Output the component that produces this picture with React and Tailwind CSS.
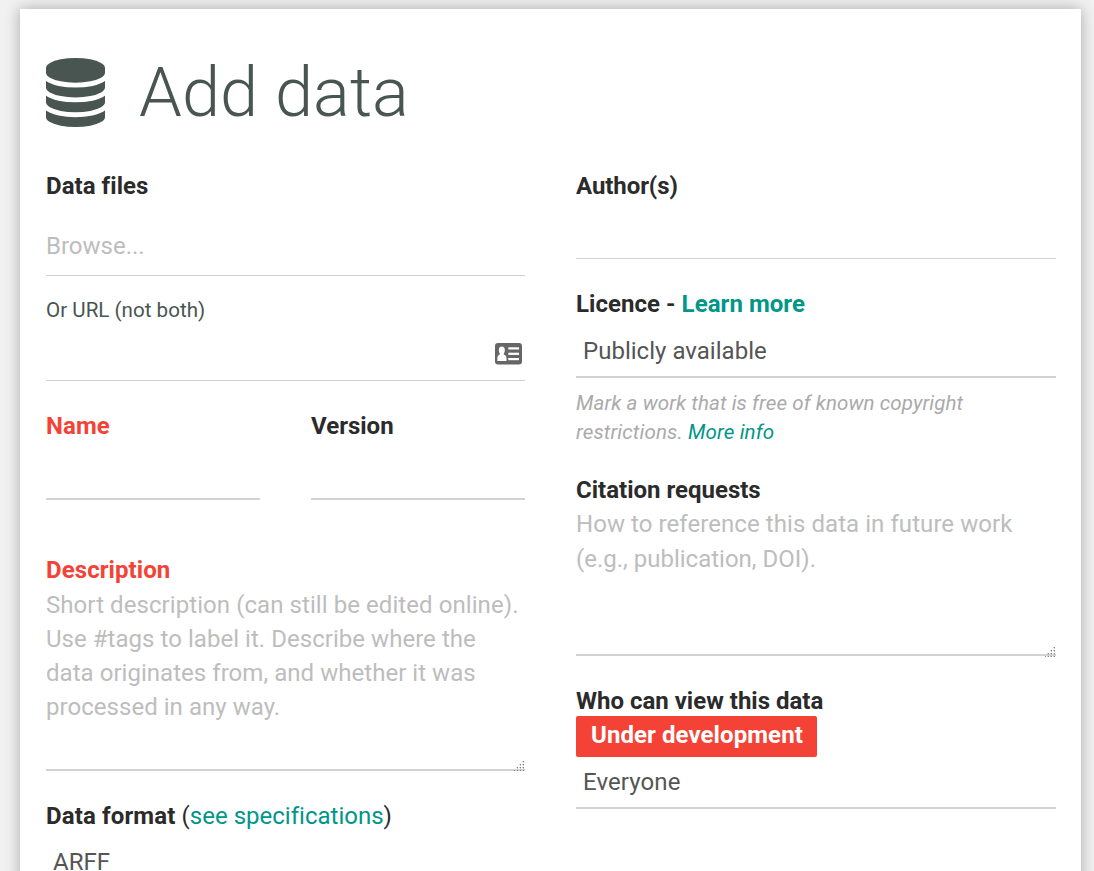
import React from "react";

function DatabaseIcon() {
  return (
    <svg viewBox="0 0 1536 1792" className="h-[69px] w-[59px] shrink-0 fill-[#485551]" preserveAspectRatio="none" aria-hidden="true">
      <path d="M768 768q237 0 443-43t325-127v170q0 69-103 128t-280 93.500-385 34.500-385-34.500-280-93.500-103-128v-170q119 84 325 127t443 43z" />
      <path d="M768 1152q237 0 443-43t325-127v170q0 69-103 128t-280 93.500-385 34.500-385-34.500-280-93.500-103-128v-170q119 84 325 127t443 43z" />
      <path d="M768 1536q237 0 443-43t325-127v170q0 69-103 128t-280 93.500-385 34.500-385-34.500-280-93.500-103-128v-170q119 84 325 127t443 43z" />
      <path d="M768 0q208 0 385 34.500t280 93.500 103 128v128q0 69-103 128t-280 93.500-385 34.500-385-34.500-280-93.500-103-128v-128q0-69 103-128t280-93.500 385-34.500z" />
    </svg>
  );
}

function ContactIcon() {
  return (
    <svg viewBox="0 0 27 22" className="h-[22px] w-[27px]" aria-hidden="true">
      <rect width="27" height="21.500" rx="3" fill="#666" />
      <g fill="#fff">
        <ellipse cx="6.800" cy="7.200" rx="3" ry="3.700" />
        <path d="M4.800 9h4v2.500c1.700.6 2.500 1.800 2.700 3.500v3H2.300v-3c.2-1.700 1-2.900 2.500-3.500z" />
        <rect x="13.300" y="4.300" width="10.700" height="2.200" />
        <rect x="13.300" y="9.700" width="10.700" height="2.200" />
        <rect x="13.300" y="15" width="10.700" height="2.200" />
      </g>
    </svg>
  );
}

function ResizeGrip({ className }) {
  const dots = [[9, 0], [9, 3], [6, 3], [9, 6], [6, 6], [3, 6], [9, 9], [6, 9], [3, 9], [0, 9]];
  return (
    <svg viewBox="0 0 10 10" className={`absolute size-[10px] ${className}`} shapeRendering="crispEdges" aria-hidden="true">
      {dots.map(([x, y]) => (
        <g key={`${x}-${y}`}>
          <rect x={x} y={y} width="1" height="1" fill="#858585" />
          <rect x={x - 1} y={y} width="1" height="1" fill="#d0d0d0" />
          <rect x={x} y={y + 1} width="1" height="1" fill="#c4c4c4" />
        </g>
      ))}
    </svg>
  );
}

function Label({ className = "", children }) {
  return <div className={`h-[34px] font-bold leading-[34px] ${className}`}>{children}</div>;
}

export default function App() {
  return (
    <div className="h-[871px] overflow-hidden bg-[#f1f1f1] pl-5 pr-[13px] pt-[9px] font-[Roboto,sans-serif] text-[24px] tracking-[0.05px] text-[#2b2b2b]">
      <main className="h-[900px] bg-white pl-[26px] pr-[25px] pt-[49px] shadow-[0_0_14px_0_rgba(0,0,0,0.3)]">
        <header className="flex h-[69px] items-center">
          <DatabaseIcon />
          <h1 className="ml-[34px] text-[68.570px] font-light leading-[69px] text-[#485551]">Add data</h1>
        </header>

        <div className="mt-[42px] grid grid-cols-[479px_480px] gap-x-[51px]">
          <section>
            <Label>Data files</Label>
            <div className="mt-[26px] h-[47px] border-b border-[#d2d2d2] leading-[34px] tracking-normal text-[#bdbdbd]">Browse...</div>
            <div className="mt-[20px] h-[28px] text-[20.570px] leading-[28px] tracking-[0.020px] text-[#485551]">Or URL (not both)</div>
            <div className="flex h-[57px] justify-end border-b border-[#d2d2d2] pr-[3px] pt-[19px]">
              <ContactIcon />
            </div>
            <div className="mt-[28px] grid grid-cols-2 gap-x-[51px]">
              <div className="h-[91px] border-b-2 border-[#d2d2d2]">
                <Label className="text-[#f44336]">Name</Label>
              </div>
              <div className="h-[91px] border-b-2 border-[#d2d2d2]">
                <Label className="tracking-normal">Version</Label>
              </div>
            </div>
            <Label className="mt-[53px] tracking-[0.080px] text-[#f44336]">Description</Label>
            <div className="relative mt-px h-[183px] border-b-2 border-[#d2d2d2] leading-[34px] tracking-[0.040px] text-[#bdbdbd]">
              <span className="tracking-[0.070px]">Short description (can still be edited online).</span>
              <br />
              Use #tags to label it. Describe where the
              <br />
              data originates from, and whether it was
              <br />
              processed in any way.
              <ResizeGrip className="-bottom-[2px] right-px" />
            </div>
            <Label className="mt-[28px] tracking-[0.130px]">
              Data format <span className="font-normal tracking-[0.010px]">(<a className="text-[#009688]">see specifications</a>)</span>
            </Label>
            <div className="mt-[12px] pl-[7px] leading-[34px] tracking-normal text-[#555]">ARFF</div>
          </section>

          <section>
            <div className="h-[90px] border-b border-[#d2d2d2]">
              <Label className="tracking-[-0.080px]">Author(s)</Label>
            </div>
            <Label className="mt-[28px]">
              Licence - <a className="text-[#009688]">Learn more</a>
            </Label>
            <div className="mt-[13px] h-[44px] border-b-2 border-[#d2d2d2] pl-[7px] leading-[34px] tracking-[0.020px] text-[#555]">Publicly available</div>
            <p className="mt-[11px] h-[57px] text-[20.570px] italic leading-[28.570px] tracking-[0.080px] text-[#aaa]">
              Mark a work that is free of known copyright
              <br />
              <span className="tracking-[0.120px]">restrictions. <a className="text-[#009688]">More info</a></span>
            </p>
            <Label className="mt-[27px] tracking-normal">Citation requests</Label>
            <div className="relative h-[149px] border-b-2 border-[#d2d2d2] leading-[35px] text-[#bdbdbd]">
              <div className="tracking-[0.070px]">How to reference this data in future work</div>
              <div className="tracking-normal">(e.g., publication, DOI).</div>
              <ResizeGrip className="-bottom-[3px] right-px" />
            </div>
            <Label className="mt-[28px] tracking-normal">Who can view this data</Label>
            <div className="-mt-[2px] h-[41px] w-[241px] rounded-[2px] bg-[#f44336] pl-[15px] pt-[2px] font-bold leading-[34px] tracking-[0.080px] text-white">Under development</div>
            <div className="mt-[8px] h-[44px] border-b-2 border-[#d2d2d2] pl-[7px] leading-[34px] tracking-[0.100px] text-[#555]">Everyone</div>
          </section>
        </div>
      </main>
    </div>
  );
}
